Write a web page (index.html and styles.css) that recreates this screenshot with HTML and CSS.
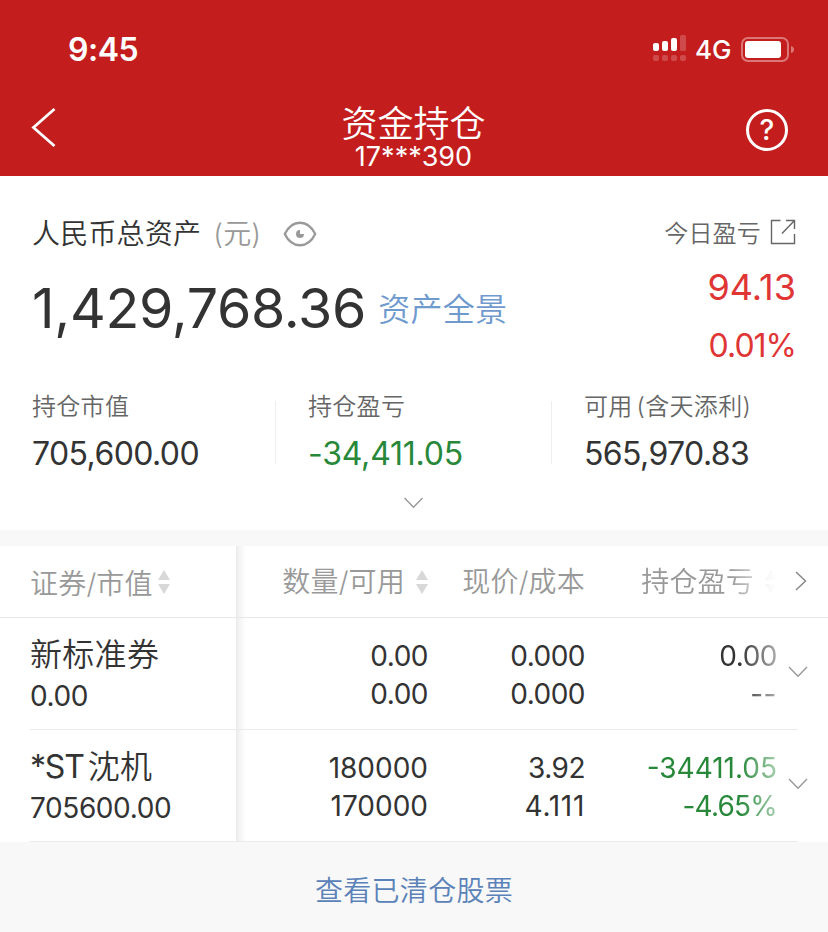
FILE: index.html
```html
<!DOCTYPE html>
<html lang="zh-CN">
<head>
    <meta charset="UTF-8">
    <title>资金持仓</title>
    <link rel="stylesheet" href="styles.css">
</head>
<body>
    <header class="top">
        <div class="status-bar">
            <span class="time">9:45</span>
            <div class="status-icons">
                <svg class="signal" width="34" height="28" viewBox="0 0 34 28">
                    <g fill="#fff">
                        <rect x="0" y="8" width="6" height="8" rx="2"/>
                        <rect x="9" y="6" width="6" height="10" rx="2"/>
                        <rect x="18" y="3" width="6" height="13" rx="2"/>
                    </g>
                    <g fill="#fff" opacity="0.2">
                        <rect x="27" y="0" width="6" height="16" rx="1.5"/>
                        <rect x="0" y="20" width="6" height="6" rx="2"/>
                        <rect x="9" y="20" width="6" height="6" rx="2"/>
                        <rect x="18" y="20" width="6" height="6" rx="2"/>
                        <rect x="27" y="20" width="6" height="6" rx="2"/>
                    </g>
                </svg>
                <span class="network">4G</span>
                <svg class="battery" width="54" height="26" viewBox="0 0 54 26">
                    <rect x="1" y="1" width="46" height="23" rx="6" fill="none" stroke="#fff" stroke-opacity="0.4" stroke-width="2"/>
                    <rect x="4" y="4" width="36" height="17" rx="3" fill="#fff"/>
                    <path d="M50 9 Q53 10 53 12.5 Q53 15 50 16 Z" fill="#fff" opacity="0.4"/>
                </svg>
            </div>
        </div>
        <div class="nav">
            <svg class="back" width="26" height="42" viewBox="0 0 26 42">
                <path d="M23.5 2 L2.5 20.5 L23.5 39" fill="none" stroke="#fff" stroke-width="2.8"/>
            </svg>
            <div class="nav-title">
                <h1>资金持仓</h1>
                <p>17***390</p>
            </div>
            <div class="help">?</div>
        </div>
    </header>

    <section class="summary">
        <div class="assets">
            <div class="total">
                <div class="total-label">
                    <span>人民币总资产</span>
                    <span class="unit">(元)</span>
                    <svg class="eye" width="34" height="26" viewBox="0 0 34 26">
                        <path d="M1.8 13 C9 -2 25 -2 32.2 13 C25 28 9 28 1.8 13 Z" fill="none" stroke="#999" stroke-width="2.3"/>
                        <path d="M17 9 A4 4 0 1 0 21 13 L17 13 Z" fill="#999"/>
                    </svg>
                </div>
                <div class="total-value">
                    <span class="amount">1,429,768.36</span>
                    <a class="panorama">资产全景</a>
                </div>
            </div>
            <div class="today">
                <div class="today-label">
                    <span>今日盈亏</span>
                    <svg width="26" height="26" viewBox="0 0 26 26" fill="none" stroke="#666" stroke-width="1.4">
                        <path d="M10.5 1.5 H1.5 V24.5 H24.5 V15"/>
                        <path d="M16 1.5 H24.5 V10 M24.5 1.5 L12 14.5"/>
                    </svg>
                </div>
                <div class="today-value">94.13</div>
                <div class="today-rate">0.01%</div>
            </div>
        </div>

        <div class="stats">
            <div class="stat">
                <div class="stat-label">持仓市值</div>
                <div class="stat-value">705,600.00</div>
            </div>
            <div class="stat">
                <div class="stat-label">持仓盈亏</div>
                <div class="stat-value loss">-34,411.05</div>
            </div>
            <div class="stat">
                <div class="stat-label">可用<span class="note">(含天添利)</span></div>
                <div class="stat-value">565,970.83</div>
            </div>
        </div>

        <svg class="expand" width="20" height="12" viewBox="0 0 20 12">
            <path d="M0.5 1 L9.5 10.3 L18.5 1" fill="none" stroke="#999" stroke-width="1.4"/>
        </svg>
    </section>

    <section class="holdings">
        <div class="row head">
            <div class="name">证券/市值
                <svg class="sort" width="12" height="24" viewBox="0 0 12 24" fill="#d8d8d8"><path d="M6 0 L12 10 H0 Z M6 24 L12 14 H0 Z"/></svg>
            </div>
            <div class="cell">数量/可用
                <svg class="sort" width="12" height="24" viewBox="0 0 12 24" fill="#d8d8d8"><path d="M6 0 L12 10 H0 Z M6 24 L12 14 H0 Z"/></svg>
            </div>
            <div class="cell">现价/成本</div>
            <div class="cell fade">持仓盈亏
                <svg class="sort" width="12" height="24" viewBox="0 0 12 24" fill="#d8d8d8"><path d="M6 0 L12 10 H0 Z M6 24 L12 14 H0 Z"/></svg>
            </div>
            <svg class="next" width="12" height="20" viewBox="0 0 12 20">
                <path d="M1 1 L10.5 10 L1 19" fill="none" stroke="#888" stroke-width="1.5"/>
            </svg>
        </div>
        <div class="row">
            <div class="name"><strong>新标准券</strong><span>0.00</span></div>
            <div class="cell"><span>0.00</span><span>0.00</span></div>
            <div class="cell"><span>0.000</span><span>0.000</span></div>
            <div class="cell fade"><span>0.00</span><span class="empty">--</span></div>
            <svg class="more" width="20" height="12" viewBox="0 0 20 12">
                <path d="M1 1 L10 10.3 L19 1" fill="none" stroke="#999" stroke-width="1.4"/>
            </svg>
        </div>
        <div class="row">
            <div class="name"><strong><span class="st">*ST</span>沈机</strong><span>705600.00</span></div>
            <div class="cell wide"><span>180000</span><span>170000</span></div>
            <div class="cell"><span>3.92</span><span class="ones">4.111</span></div>
            <div class="cell fade loss wide"><span>-34411.05</span><span class="rate">-4.65%</span></div>
            <svg class="more" width="20" height="12" viewBox="0 0 20 12">
                <path d="M1 1 L10 10.3 L19 1" fill="none" stroke="#999" stroke-width="1.4"/>
            </svg>
        </div>
    </section>

    <footer class="cleared"><a>查看已清仓股票</a></footer>
</body>
</html>
```

FILE: styles.css
```css
* {
    box-sizing: border-box;
}

body {
    margin: 0;
    font-family: Inter, "Noto Sans CJK SC", sans-serif;
    font-weight: 380;
    color: #333;
    background-color: #f8f8f8;
}

h1, p {
    margin: 0;
    font-weight: 400;
}

svg {
    display: block;
    flex: none;
}

/* header */
.top {
    height: 176px;
    background-color: #c41d1d;
    color: #fff;
}

.status-bar {
    display: flex;
    justify-content: space-between;
    height: 100px;
    padding: 30px 33px 0 68px;
}

.time {
    font-size: 32px;
    font-weight: 600;
    line-height: 40px;
    letter-spacing: -0.5px;
}

.status-icons {
    display: flex;
    align-items: flex-start;
}

.signal {
    margin-top: 5px;
}

.network {
    margin-left: 8px;
    width: 37px;
    font-size: 26px;
    font-weight: 450;
    line-height: 40px;
}

.battery {
    margin: 7px 0 0 9px;
}

.nav {
    display: flex;
    justify-content: space-between;
    height: 76px;
    padding: 0 40px 0 31px;
}

.back {
    margin-top: 7px;
    margin-right: 16px;
}

.nav-title {
    margin-left: 8px;
    text-align: center;
}

.nav-title h1 {
    font-size: 36px;
    font-weight: 350;
    line-height: 49px;
}

.nav-title p {
    font-size: 27px;
    font-weight: 370;
    line-height: 15px;
}

.help {
    width: 42px;
    height: 42px;
    margin-top: 9px;
    border: 3px solid #fff;
    border-radius: 50%;
    font-size: 28px;
    font-weight: 450;
    line-height: 37px;
    text-align: center;
}

/* asset summary */
.summary {
    height: 354px;
    padding: 38px 32px 0;
    background-color: #fff;
}

.assets {
    display: flex;
    justify-content: space-between;
    height: 173px;
}

.total-label {
    display: flex;
    align-items: center;
    height: 36px;
    font-size: 28px;
    font-weight: 350;
    letter-spacing: 0.2px;
}

.unit {
    margin-left: 12px;
    color: #999;
}

.eye {
    margin: 3px 0 0 22px;
}

.total-value {
    display: flex;
    align-items: center;
    height: 114px;
}

.amount {
    font-size: 55.5px;
    letter-spacing: -0.3px;
}

.panorama {
    margin-left: 12px;
    font-size: 32px;
    font-weight: 350;
    letter-spacing: 0.3px;
    color: #6f9ace;
}

.today {
    text-align: right;
    color: #e03535;
}

.today-label {
    display: flex;
    align-items: center;
    justify-content: flex-end;
    height: 34px;
    font-size: 24px;
    font-weight: 350;
    letter-spacing: 0.2px;
    color: #666;
}

.today-label svg {
    margin: 2px 0 0 9px;
}

.today-value {
    font-size: 36px;
    line-height: 79px;
}

.today-rate {
    font-size: 32px;
    line-height: 38px;
    letter-spacing: -1px;
}

.stats {
    display: grid;
    grid-template-columns: 276px 276px 1fr;
    height: 110px;
    margin: 0 -32px;
}

.stat {
    height: 87px;
    padding-left: 32px;
    background: linear-gradient(#eee, #eee) no-repeat right 14px / 1px 63px;
}

.stat:last-child {
    background: none;
}

.stat-label {
    font-size: 24px;
    font-weight: 350;
    line-height: 40px;
    letter-spacing: 0.3px;
    color: #666;
}

.note {
    margin-left: 4px;
}

.stat-value {
    font-size: 32px;
    line-height: 54px;
    letter-spacing: -0.6px;
}

.loss {
    color: #27883a;
}

.stat-value.loss {
    letter-spacing: -0.2px;
}

.expand {
    margin: 0 auto;
}

/* holdings table */
.holdings {
    margin-top: 16px;
    background: linear-gradient(to right, #ebebeb, #f5f5f5 4px, #fff) no-repeat 236px 0 / 10px 100% #fff;
}

.row {
    display: grid;
    grid-template-columns: 236px 192px 157px 192px 51px;
    height: 112px;
    font-size: 28px;
    letter-spacing: -0.5px;
    background: linear-gradient(#ebebeb, #ebebeb) no-repeat 30px 111px / 768px 1px;
}

.head {
    height: 72px;
    font-weight: 350;
    letter-spacing: 0.2px;
    color: #999;
    background: linear-gradient(#e8e8e8, #e8e8e8) no-repeat 0 71px / 100% 1px;
}

.name {
    display: flex;
    flex-direction: column;
    padding: 16px 0 0 30px;
}

.name strong {
    font-size: 32px;
    font-weight: 350;
    line-height: 42px;
    letter-spacing: 0.3px;
}

.name span {
    line-height: 40px;
    letter-spacing: -0.4px;
}

.name .st {
    margin-right: 4px;
    font-weight: 380;
    letter-spacing: -1.2px;
}

.cell {
    display: flex;
    flex-direction: column;
    align-items: flex-end;
    padding-top: 19px;
    line-height: 38px;
}

.wide {
    letter-spacing: 0;
}

.ones {
    letter-spacing: 0.7px;
}

.rate {
    letter-spacing: -0.8px;
}

.empty {
    letter-spacing: 0.5px;
}

.head .name,
.head .cell {
    flex-direction: row;
    align-items: center;
    padding-top: 0;
    white-space: nowrap;
}

.head .cell {
    justify-content: flex-end;
}

.sort {
    margin-left: 5px;
}

.cell .sort {
    margin-left: 11px;
}

.fade {
    -webkit-mask-image: linear-gradient(to right, #000 155px, rgba(0, 0, 0, 0.4) 192px);
    mask-image: linear-gradient(to right, #000 155px, rgba(0, 0, 0, 0.4) 192px);
}

.head .fade {
    -webkit-mask-image: linear-gradient(to right, #000 145px, transparent 192px);
    mask-image: linear-gradient(to right, #000 145px, transparent 192px);
}

.next {
    margin: 25px 0 0 18px;
}

.more {
    margin: 48px 0 0 11px;
}

/* link to closed positions */
.cleared {
    height: 90px;
    font-size: 28px;
    font-weight: 350;
    line-height: 98px;
    letter-spacing: 0.3px;
    text-align: center;
    color: #5b82b8;
}
```
